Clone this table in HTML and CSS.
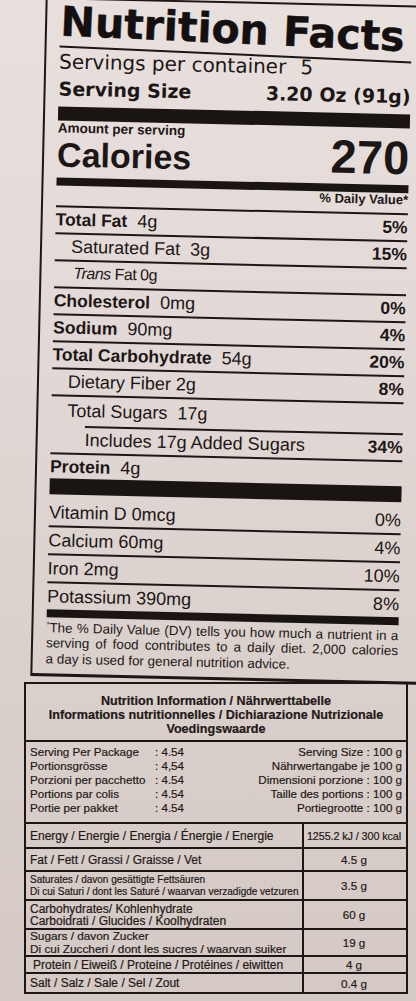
FILE: index.html
```html
<!DOCTYPE html>
<html lang="en">
<head>
    <meta charset="UTF-8">
    <meta name="viewport" content="width=device-width, initial-scale=1.0">
    <title>Nutrition Facts</title>
    <link rel="stylesheet" href="styles.css">
</head>
<body>
    <!-- US label -->
    <div class="facts">
        <div class="facts-title">Nutrition Facts</div>
        <div class="servings">Servings per container<span class="servings-count">5</span></div>
        <div class="serving-size"><span>Serving Size</span><span>3.20 Oz (91g)</span></div>
        <div class="bar bar-thick"></div>
        <div class="amount">Amount per serving</div>
        <div class="calories"><span class="cal-label">Calories</span><span class="cal-value">270</span></div>
        <div class="bar bar-medium"></div>
        <div class="dv-head">% Daily Value*</div>

        <div class="row"><span><b>Total Fat</b><span class="amt">4g</span></span><b>5%</b></div>
        <div class="row indent"><span>Saturated Fat<span class="amt">3g</span></span><b>15%</b></div>
        <div class="row indent trans"><span><i>Trans</i> Fat 0g</span></div>
        <div class="row"><span><b>Cholesterol</b><span class="amt">0mg</span></span><b>0%</b></div>
        <div class="row"><span><b>Sodium</b><span class="amt">90mg</span></span><b>4%</b></div>
        <div class="row"><span><b>Total Carbohydrate</b><span class="amt">54g</span></span><b>20%</b></div>
        <div class="row indent"><span>Dietary Fiber 2g</span><b>8%</b></div>
        <div class="row indent sugars"><span>Total Sugars<span class="amt">17g</span></span></div>
        <div class="row added"><span>Includes 17g Added Sugars</span><b>34%</b></div>
        <div class="row protein"><span><b>Protein</b><span class="amt">4g</span></span></div>
        <div class="bar bar-heavy"></div>

        <div class="row vit vit-first"><span>Vitamin D 0mcg</span><span>0%</span></div>
        <div class="row vit"><span>Calcium 60mg</span><span>4%</span></div>
        <div class="row vit"><span>Iron 2mg</span><span>10%</span></div>
        <div class="row vit vit-last"><span>Potassium 390mg</span><span>8%</span></div>
        <div class="bar bar-medium"></div>

        <p class="footnote"><sup>*</sup>The % Daily Value (DV) tells you how much a nutrient in a serving of food contributes to a daily diet. 2,000 calories <span class="nowrap">a day</span> is used for general nutrition advice.</p>
    </div>

    <!-- EU table -->
    <div class="info">
        <div class="info-head">
            Nutrition Information / Nährwerttabelle<br>
            Informations nutritionnelles / Dichiarazione Nutrizionale<br>
            Voedingswaarde
        </div>
        <div class="serve">
            <div class="serve-row"><span>Serving Per Package</span><span>: 4.54</span><span>Serving Size : 100 g</span></div>
            <div class="serve-row"><span>Portionsgrösse</span><span>: 4,54</span><span>Nährwertangabe je 100 g</span></div>
            <div class="serve-row"><span>Porzioni per pacchetto</span><span>: 4.54</span><span>Dimensioni porzione : 100 g</span></div>
            <div class="serve-row"><span>Portions par colis</span><span>: 4.54</span><span>Taille des portions : 100 g</span></div>
            <div class="serve-row"><span>Portie per pakket</span><span>: 4.54</span><span>Portiegrootte : 100 g</span></div>
        </div>
        <div class="nut nut-energy">
            <div class="nut-name">Energy / Energie / Energia / Énergie / Energie</div>
            <div class="nut-val energy-val">1255.2 kJ / 300 kcal</div>
        </div>
        <div class="nut nut-fat">
            <div class="nut-name">Fat / Fett / Grassi / Graisse / Vet</div>
            <div class="nut-val">4.5 g</div>
        </div>
        <div class="nut nut-sat">
            <div class="nut-name small">Saturates / davon gesättigte Fettsäuren<br>Di cui Saturi / dont les Saturé / waarvan verzadigde vetzuren</div>
            <div class="nut-val">3.5 g</div>
        </div>
        <div class="nut nut-carb">
            <div class="nut-name">Carbohydrates/ Kohlenhydrate<br>Carboidrati / Glucides / Koolhydraten</div>
            <div class="nut-val">60 g</div>
        </div>
        <div class="nut nut-sugar">
            <div class="nut-name">Sugars / davon Zucker<br>Di cui Zuccheri / dont les sucres / waarvan suiker</div>
            <div class="nut-val">19 g</div>
        </div>
        <div class="nut nut-protein">
            <div class="nut-name">Protein / Eiweiß / Proteine / Protéines / eiwitten</div>
            <div class="nut-val">4 g</div>
        </div>
        <div class="nut nut-salt">
            <div class="nut-name">Salt / Salz / Sale / Sel / Zout</div>
            <div class="nut-val">0.4 g</div>
        </div>
    </div>
</body>
</html>
```

FILE: styles.css
```css
html, body {
    margin: 0;
    padding: 0;
}
body {
    width: 416px;
    height: 1001px;
    overflow: hidden;
    background: linear-gradient(180deg, #e8e0dd 0%, #e2d9d6 35%, #dad0cc 65%, #d4c9c4 100%);
    color: #1c1715;
    font-family: "Liberation Sans", Arial, sans-serif;
}

/* US label, printed a little skewed */
.facts {
    width: 352px;
    margin: -3px 0 0 38px;
    padding: 0 22px 0 13px;
    border: 2px solid #1c1715;
    border-bottom-width: 3px;
    transform: rotate(1.3deg);
    transform-origin: 0 50%;
}
.facts-title {
    font-family: "DejaVu Sans", sans-serif;
    font-weight: bold;
    font-size: 41px;
    line-height: 40px;
    padding: 2px 0 4px;
    border-bottom: 2px solid #1c1715;
    white-space: nowrap;
    color: #141010;
    -webkit-text-stroke: 0.5px #141010;
    transform: rotate(1.3deg);
    transform-origin: 0 100%;
}
.servings {
    font-family: "DejaVu Sans", sans-serif;
    font-size: 20px;
    line-height: 24px;
    padding-top: 2px;
    white-space: nowrap;
}
.servings-count {
    margin-left: 14px;
}
.serving-size {
    display: flex;
    justify-content: space-between;
    font-family: "DejaVu Sans", sans-serif;
    font-weight: bold;
    font-size: 19px;
    line-height: 24px;
    padding: 3px 0 6px;
}
.bar {
    background: #1a1513;
}
.bar-thick {
    height: 14px;
}
.bar-medium {
    height: 8px;
}
.bar-heavy {
    height: 16px;
}
.amount {
    font-weight: bold;
    font-size: 13.5px;
    line-height: 16px;
}
.calories {
    display: flex;
    justify-content: space-between;
    align-items: baseline;
    font-weight: bold;
    padding-bottom: 8.5px;
}
.cal-label {
    font-size: 34px;
    line-height: 28px;
}
.cal-value {
    font-size: 47px;
    line-height: 28px;
}
.dv-head {
    text-align: right;
    font-weight: bold;
    font-size: 13px;
    line-height: 14px;
    padding-bottom: 6px;
    border-bottom: 2px solid #1c1715;
}

/* nutrient rows */
.row {
    display: flex;
    justify-content: space-between;
    align-items: center;
    box-sizing: border-box;
    height: 27px;
    font-size: 18px;
    line-height: 24px;
    border-bottom: 2px solid #1c1715;
    white-space: nowrap;
}
.row b {
    font-size: 17.5px;
}
.amt {
    margin-left: 10px;
}
.indent {
    padding-left: 16px;
}
.trans {
    padding-left: 19px;
    font-size: 16px;
    letter-spacing: -0.5px;
}
.sugars {
    height: 29px;
    border-bottom: none;
}
.added {
    height: 29px;
    padding: 2px 0 0 34px;
    background: linear-gradient(#1c1715, #1c1715) 34px 0 / calc(100% - 34px) 2px no-repeat;
}
.protein {
    height: 24px;
    border-bottom: none;
}
.vit {
    height: 28px;
}
.vit-first {
    height: 33px;
    padding-top: 5px;
}
.vit-last {
    height: 26px;
    border-bottom: none;
}
.footnote {
    margin: 0;
    padding: 3px 0 7px;
    font-size: 13.4px;
    line-height: 15.5px;
    text-align: justify;
}
.footnote sup {
    font-size: 8px;
    line-height: 0;
    vertical-align: 5px;
}
.nowrap {
    white-space: nowrap;
}

/* EU table */
.info {
    width: 380px;
    margin: 6px 0 0 24px;
    border: 2px solid #1c1715;
    color: #1f1917;
    -webkit-text-stroke: 0.2px #1f1917;
}
.info-head {
    text-align: center;
    font-weight: bold;
    font-size: 12.6px;
    line-height: 14px;
    padding: 10px 0 4px;
    border-bottom: 2px solid #1c1715;
    white-space: nowrap;
}
.serve {
    padding: 3px 4px 7px;
    border-bottom: 2px solid #1c1715;
    font-size: 11.6px;
    line-height: 14px;
}
.serve-row {
    display: grid;
    grid-template-columns: 125px 60px 1fr;
    white-space: nowrap;
}
.serve-row span:last-child {
    text-align: right;
}
.nut {
    display: grid;
    grid-template-columns: 276px 102px;
    box-sizing: border-box;
    border-bottom: 2px solid #1c1715;
    font-size: 12px;
}
.nut-name {
    display: flex;
    flex-direction: column;
    justify-content: center;
    padding-left: 4px;
    line-height: 12px;
    white-space: nowrap;
}
.nut-name.small {
    font-size: 10px;
}
.nut-val {
    display: flex;
    align-items: center;
    justify-content: center;
    border-left: 2px solid #1c1715;
    font-size: 11.6px;
    white-space: nowrap;
}
.energy-val {
    font-size: 10.8px;
    letter-spacing: -0.1px;
}
.nut-energy { height: 25px; }
.nut-fat { height: 23px; }
.nut-sat { height: 29px; }
.nut-carb { height: 29px; }
.nut-sugar { height: 27px; }
.nut-sugar .nut-name {
    font-size: 11.8px;
    line-height: 12.5px;
}
.nut-protein { height: 17px; }
.nut-protein .nut-name { padding-left: 7px; }
.nut-salt {
    height: 18px;
    border-bottom: none;
}
```
